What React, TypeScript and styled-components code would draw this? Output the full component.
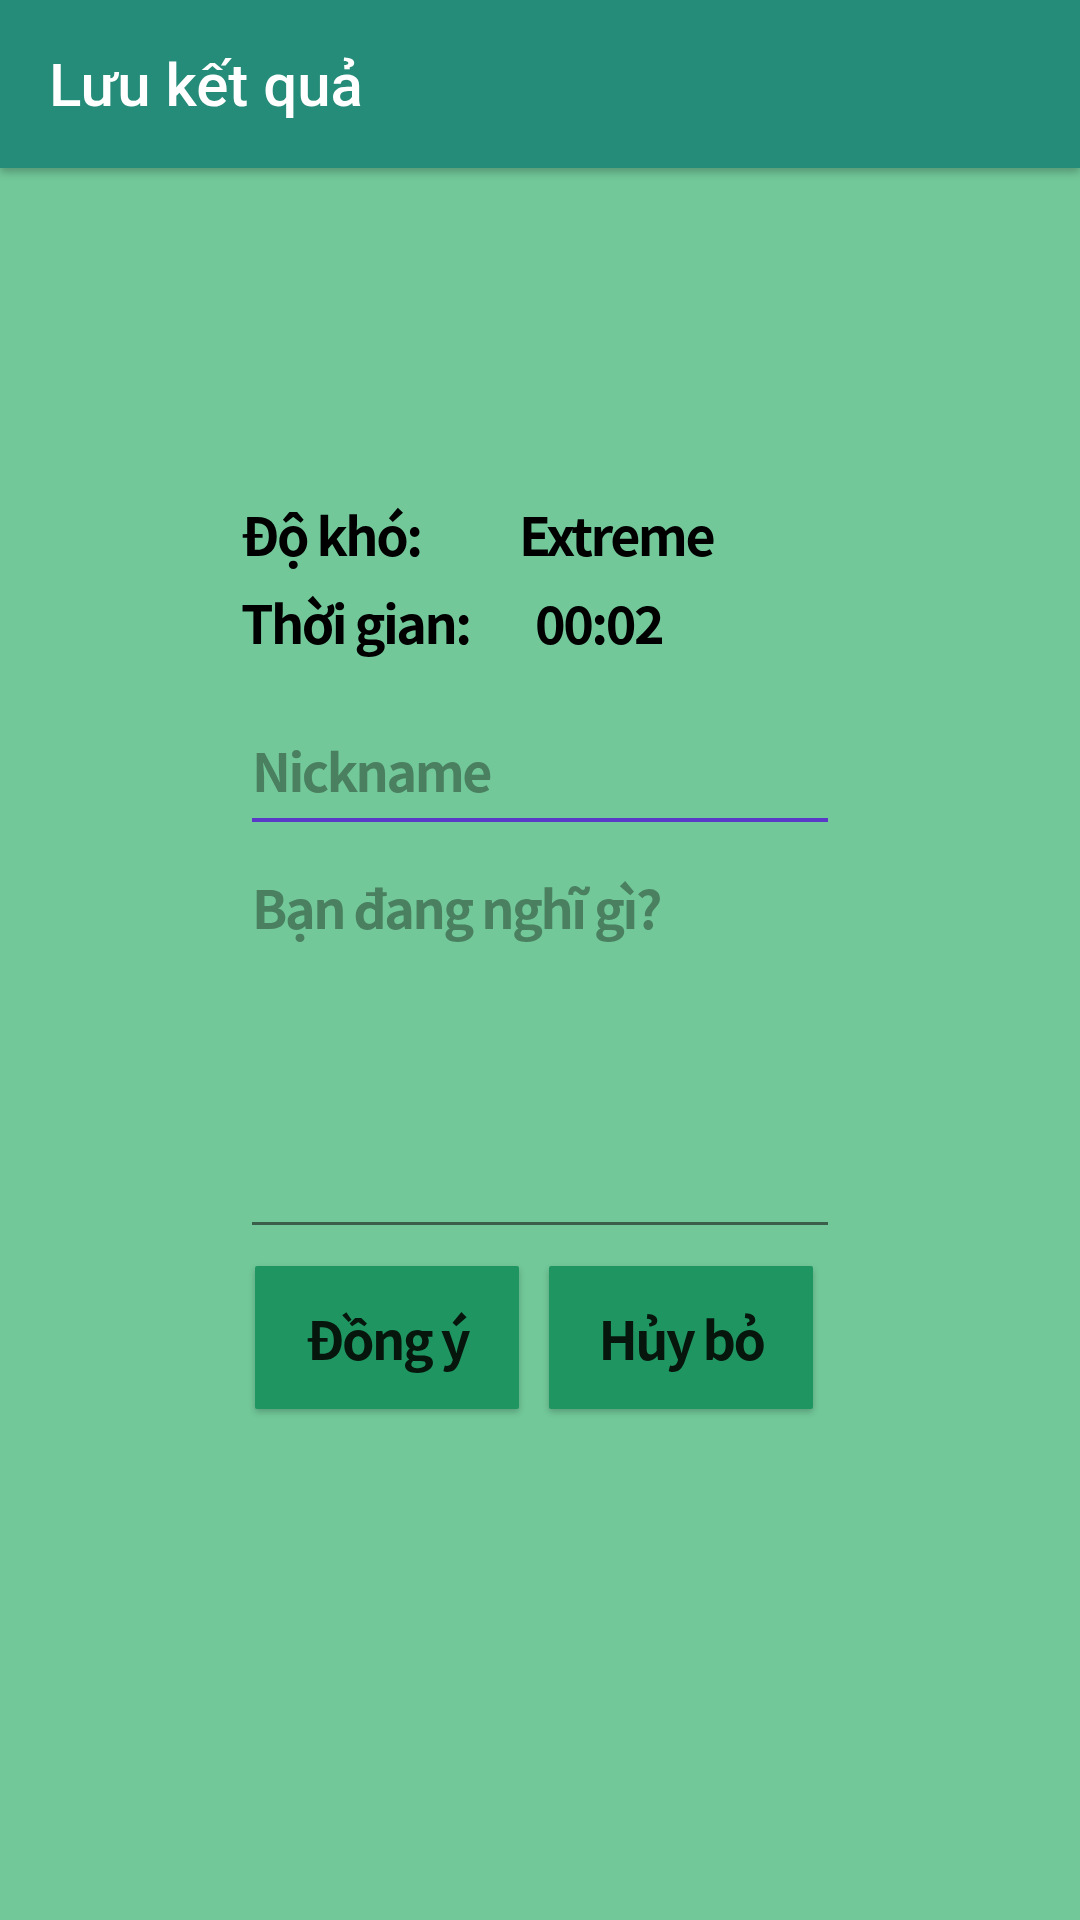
import React from "react";
import styled, { createGlobalStyle } from "styled-components";

const Global = createGlobalStyle`
  html, body { margin: 0; padding: 0; }
  body { background: #72c899; }
  #root { min-height: 1920px; }
`;

const Page = styled.div`
  min-height: 1920px;
  background: #72c899;
  display: flex;
  flex-direction: column;
`;

const AppBar = styled.header`
  height: 168px;
  background: #268c7a;
  display: flex;
  align-items: center;
  padding-left: 49px;
  padding-top: 3px;
  box-sizing: border-box;
  box-shadow: 0 4px 8px rgba(0, 0, 0, 0.25);
  position: relative;
  z-index: 1;
`;

const Title = styled.h1`
  margin: 0;
  font-family: Roboto, "Noto Sans", sans-serif;
  font-weight: 500;
  font-size: 60px;
  color: #ffffff;
`;

const Content = styled.main`
  display: flex;
  flex-direction: column;
  padding: 322px 0 0 241px;
  font-family: "Noto Sans CJK SC", "Noto Sans", sans-serif;
  font-weight: 700;
  letter-spacing: -2.5px;
`;

const InfoGrid = styled.div`
  display: grid;
  grid-template-columns: 182px auto;
  width: 480px;
`;

const Label = styled.div`
  font-size: 52px;
  line-height: 88px;
  color: #000;
  white-space: nowrap;
`;

const Value = styled.div<{ $offset: number }>`
  font-size: 52px;
  line-height: 88px;
  color: #000;
  padding-left: ${(p) => p.$offset}px;
  white-space: nowrap;
`;

const Field = styled.div<{ $height: number; $line: string; $thick: number; $top: number }>`
  margin-left: 11px;
  margin-top: ${(p) => p.$top}px;
  width: 576px;
  height: ${(p) => p.$height}px;
  border-bottom: ${(p) => p.$thick}px solid ${(p) => p.$line};
  box-sizing: border-box;
`;

const Placeholder = styled.div`
  font-size: 52px;
  line-height: 88px;
  color: #4a8060;
  white-space: nowrap;
`;

const Buttons = styled.div`
  display: flex;
  gap: 30px;
  margin: 41px 0 0 14px;
`;

const Button = styled.button`
  width: 264px;
  height: 143px;
  border: none;
  border-radius: 2px;
  background: #1f9661;
  color: #06160d;
  font-family: "Noto Sans CJK SC", "Noto Sans", sans-serif;
  font-weight: 700;
  font-size: 52px;
  letter-spacing: -2.5px;
  display: flex;
  align-items: center;
  justify-content: center;
  box-shadow: 0 3px 6px rgba(0, 0, 0, 0.22);
  padding: 0;
`;

export default function App() {
  return (
    <Page>
      <Global />
      <AppBar>
        <Title>Lưu kết quả</Title>
      </AppBar>
      <Content>
        <InfoGrid>
          <Label>Độ khó:</Label>
          <Value $offset={96}>Extreme</Value>
          <Label>Thời gian:</Label>
          <Value $offset={112}>00:02</Value>
        </InfoGrid>
        <Field $height={96} $line="#5a38c8" $thick={4} $top={60}>
          <Placeholder>Nickname</Placeholder>
        </Field>
        <Field $height={362} $line="#3a5f4a" $thick={3} $top={41}>
          <Placeholder>Bạn đang nghĩ gì?</Placeholder>
        </Field>
        <Buttons>
          <Button>Đồng ý</Button>
          <Button>Hủy bỏ</Button>
        </Buttons>
      </Content>
    </Page>
  );
}
